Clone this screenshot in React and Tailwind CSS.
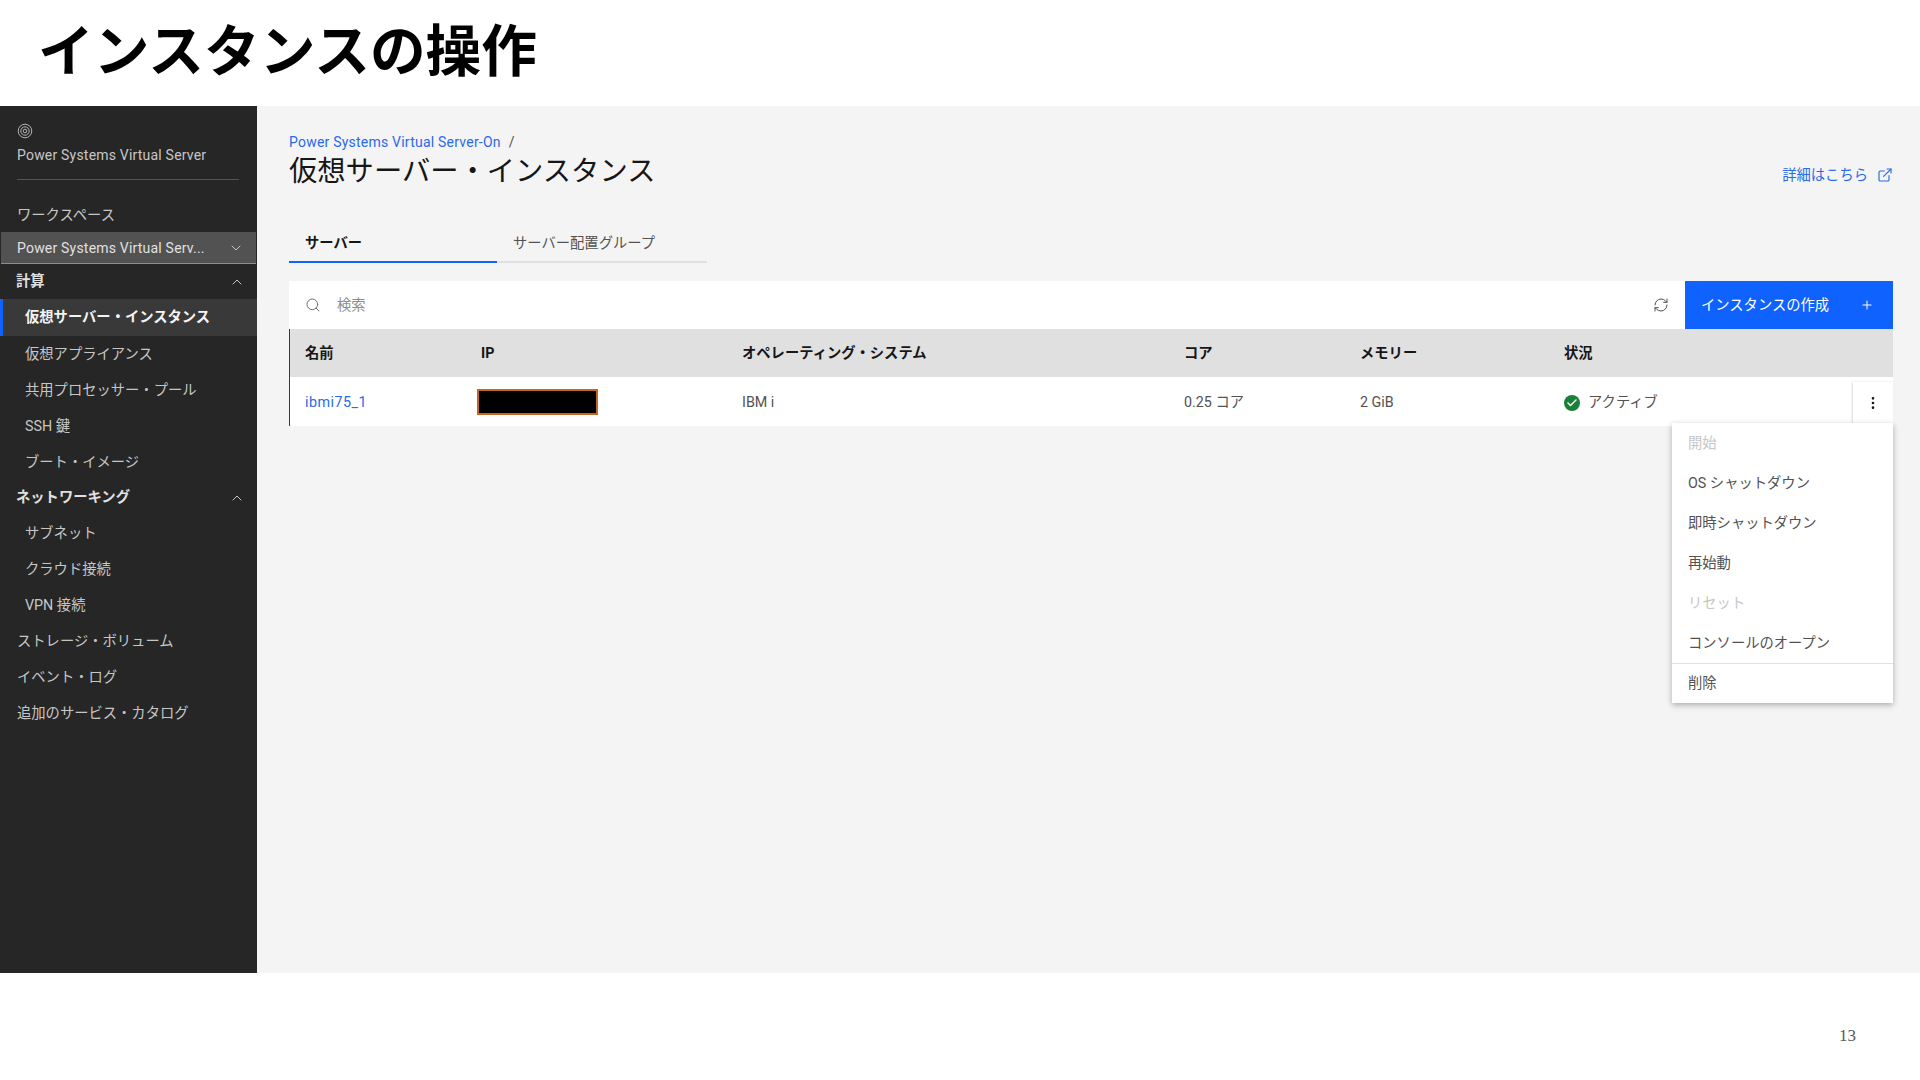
import React from 'react';
import { ChevronDown, ChevronUp, Search, RefreshCw, Plus, ExternalLink, EllipsisVertical, Check } from 'lucide-react';

const FONT = "font-['Roboto','Noto_Sans_CJK_JP',sans-serif]";
const BLUE = 'text-[#2a6ae8]';

const NavLink = ({ children, sub, active }) => (
  <div className={`flex items-center pt-[1px] text-[14.3px] shrink-0 ${sub ? 'pl-[25px]' : 'pl-[17px]'} ${active ? 'h-[37px] bg-[#393939] border-l-[3px] border-[#0f62fe] !pl-[22px] font-bold text-[#f4f4f4]' : 'h-9 text-[#c6c6c6]'}`}>
    {children}
  </div>
);

const NavGroup = ({ children }) => (
  <div className="h-[35px] flex items-center justify-between pl-[16px] pr-[12px] text-[14.3px] font-bold text-[#e0e0e0] shrink-0">
    <span className="pt-[1px]">{children}</span>
    <ChevronUp className="w-4 h-4 text-[#c6c6c6]" strokeWidth={1.5} />
  </div>
);

const Sidebar = () => (
  <aside className="w-[257px] shrink-0 bg-[#262626] flex flex-col">
    <div className="pt-[17px] px-[17px]">
      <svg viewBox="0 0 16 16" className="w-4 h-4 text-[#b5b5b5]" fill="none" stroke="currentColor" strokeWidth="1">
        <circle cx="8" cy="8" r="6.8" />
        <circle cx="8" cy="8" r="4.2" />
        <circle cx="8" cy="8" r="1.8" />
      </svg>
      <div className="mt-[6px] text-sm leading-5 text-[#c6c6c6] tracking-[0.2px]">Power Systems Virtual Server</div>
      <div className="mt-[14px] mr-[1px] h-px bg-[#525252]" />
    </div>
    <div className="mt-[17px]">
      <NavLink>ワークスペース</NavLink>
    </div>
    <div className="mx-[1px] h-[32px] -mt-[1px] bg-[#525252] border-b border-[#8d8d8d] flex items-center justify-between pl-[16px] pr-[12px] text-sm text-[#e0e0e0] tracking-[0.2px]">
      <span>Power Systems Virtual Serv...</span>
      <ChevronDown className="w-4 h-4 text-[#c6c6c6]" strokeWidth={1.5} />
    </div>
    <NavGroup>計算</NavGroup>
    <NavLink sub active>仮想サーバー・インスタンス</NavLink>
    <NavLink sub>仮想アプライアンス</NavLink>
    <NavLink sub>共用プロセッサー・プール</NavLink>
    <NavLink sub>SSH 鍵</NavLink>
    <NavLink sub>ブート・イメージ</NavLink>
    <NavGroup>ネットワーキング</NavGroup>
    <NavLink sub>サブネット</NavLink>
    <NavLink sub>クラウド接続</NavLink>
    <NavLink sub>VPN 接続</NavLink>
    <NavLink>ストレージ・ボリューム</NavLink>
    <NavLink>イベント・ログ</NavLink>
    <NavLink>追加のサービス・カタログ</NavLink>
  </aside>
);

const COLS = 'grid grid-cols-[176px_261px_442px_176px_204px_1fr] pl-[15px]';

const menuItems = [
  { label: '開始', disabled: true },
  { label: 'OS シャットダウン' },
  { label: '即時シャットダウン' },
  { label: '再始動' },
  { label: 'リセット', disabled: true },
  { label: 'コンソールのオープン' },
];

const ActionMenu = () => (
  <div className="absolute right-0 top-[142px] w-[221px] bg-white shadow-[0_2px_6px_rgba(0,0,0,0.3)] text-[14.3px] z-10">
    {menuItems.map((item) => (
      <div key={item.label} className={`h-10 pt-[2px] flex items-center pl-4 ${item.disabled ? 'text-[#c6c6c6]' : 'text-[#525252]'}`}>
        {item.label}
      </div>
    ))}
    <div className="h-10 flex items-center pl-4 text-[#525252] border-t border-[#e0e0e0]">削除</div>
  </div>
);

const ServerTable = () => (
  <div className="relative mt-[18px]">
    <div className="h-12 bg-white flex items-center">
      <Search className="ml-4 w-4 h-4 text-[#6f6f6f] -mt-[1px]" strokeWidth={1.5} />
      <span className="ml-[16px] pt-[2px] text-[14.3px] text-[#8d8d8d]">検索</span>
      <RefreshCw className="ml-auto mr-[16px] w-4 h-4 text-[#525252]" strokeWidth={1.5} />
      <button className="w-[208px] h-12 bg-[#0f62fe] text-white text-[14.3px] flex items-center justify-between pl-4 pr-[19px]">
        <span className="pt-[2px]">インスタンスの作成</span>
        <Plus className="w-3.5 h-3.5" strokeWidth={1.75} />
      </button>
    </div>
    <div className="border-l border-[#393939]">
      <div className={`${COLS} h-12 pt-[2px] bg-[#e0e0e0] items-center text-[14.3px] font-bold text-[#161616]`}>
        <span>名前</span>
        <span>IP</span>
        <span>オペレーティング・システム</span>
        <span>コア</span>
        <span>メモリー</span>
        <span>状況</span>
      </div>
      <div className={`${COLS} h-[49px] pt-[2px] bg-white items-center text-[14.3px] text-[#525252] relative`}>
        <span className={`${BLUE} tracking-[0.5px]`}>ibmi75_1</span>
        <span className="block w-[121px] h-[26px] -ml-[4px] -mt-[2px] bg-black border-2 border-[#c4661f]" />
        <span>IBM i</span>
        <span>0.25 コア</span>
        <span>2 GiB</span>
        <span className="flex items-center gap-2">
          <span className="w-4 h-4 rounded-full bg-[#198038] flex items-center justify-center">
            <Check className="w-3 h-3 text-white" strokeWidth={3} />
          </span>
          アクティブ
        </span>
        <div className="absolute right-0 top-[5px] w-10 h-[41px] bg-white shadow-[-1px_0_2px_rgba(0,0,0,0.15)] flex items-center justify-center">
          <EllipsisVertical className="w-4 h-4 text-[#161616]" strokeWidth={2} />
        </div>
      </div>
    </div>
    <ActionMenu />
  </div>
);

const Main = () => (
  <main className="flex-1 bg-[#f4f4f4] pl-[32px] pr-[27px]">
    <div className="flex items-end justify-between pt-[26px]">
      <div>
        <div className="text-sm leading-5 tracking-[0.22px]">
          <span className={BLUE}>Power Systems Virtual Server-On</span>
          <span className="ml-2 text-[#525252]">/</span>
        </div>
        <h1 className="mt-[2px] text-[28.3px] leading-9 font-normal text-[#161616]">仮想サーバー・インスタンス</h1>
      </div>
      <div className={`flex items-center gap-[9px] text-[14.3px] ${BLUE} mb-[4px]`}>
        詳細はこちら
        <ExternalLink className="w-4 h-4" strokeWidth={1.75} />
      </div>
    </div>
    <div className="flex mt-[33px] text-[14.3px]">
      <div className="w-[208px] h-[40px] pl-4 pt-[3px] flex items-center font-bold text-[#161616] border-b-2 border-[#0f62fe]">サーバー</div>
      <div className="w-[210px] h-[40px] pl-4 pt-[3px] flex items-center text-[#525252] border-b-2 border-[#e0e0e0]">サーバー配置グループ</div>
    </div>
    <ServerTable />
  </main>
);

export default function App() {
  return (
    <div className={`w-[1920px] h-[1080px] bg-white flex flex-col overflow-hidden ${FONT}`}>
      <header className="h-[106px] shrink-0 flex items-center pl-[38px]">
        <h1 className="text-[55.7px] leading-none font-bold text-black">インスタンスの操作</h1>
      </header>
      <div className="h-[867px] flex shrink-0">
        <Sidebar />
        <Main />
      </div>
      <footer className="flex-1 flex justify-end items-center pr-[64px] pt-[19px] text-[17px] text-[#595959] font-['Liberation_Serif',serif]">
        13
      </footer>
    </div>
  );
}
